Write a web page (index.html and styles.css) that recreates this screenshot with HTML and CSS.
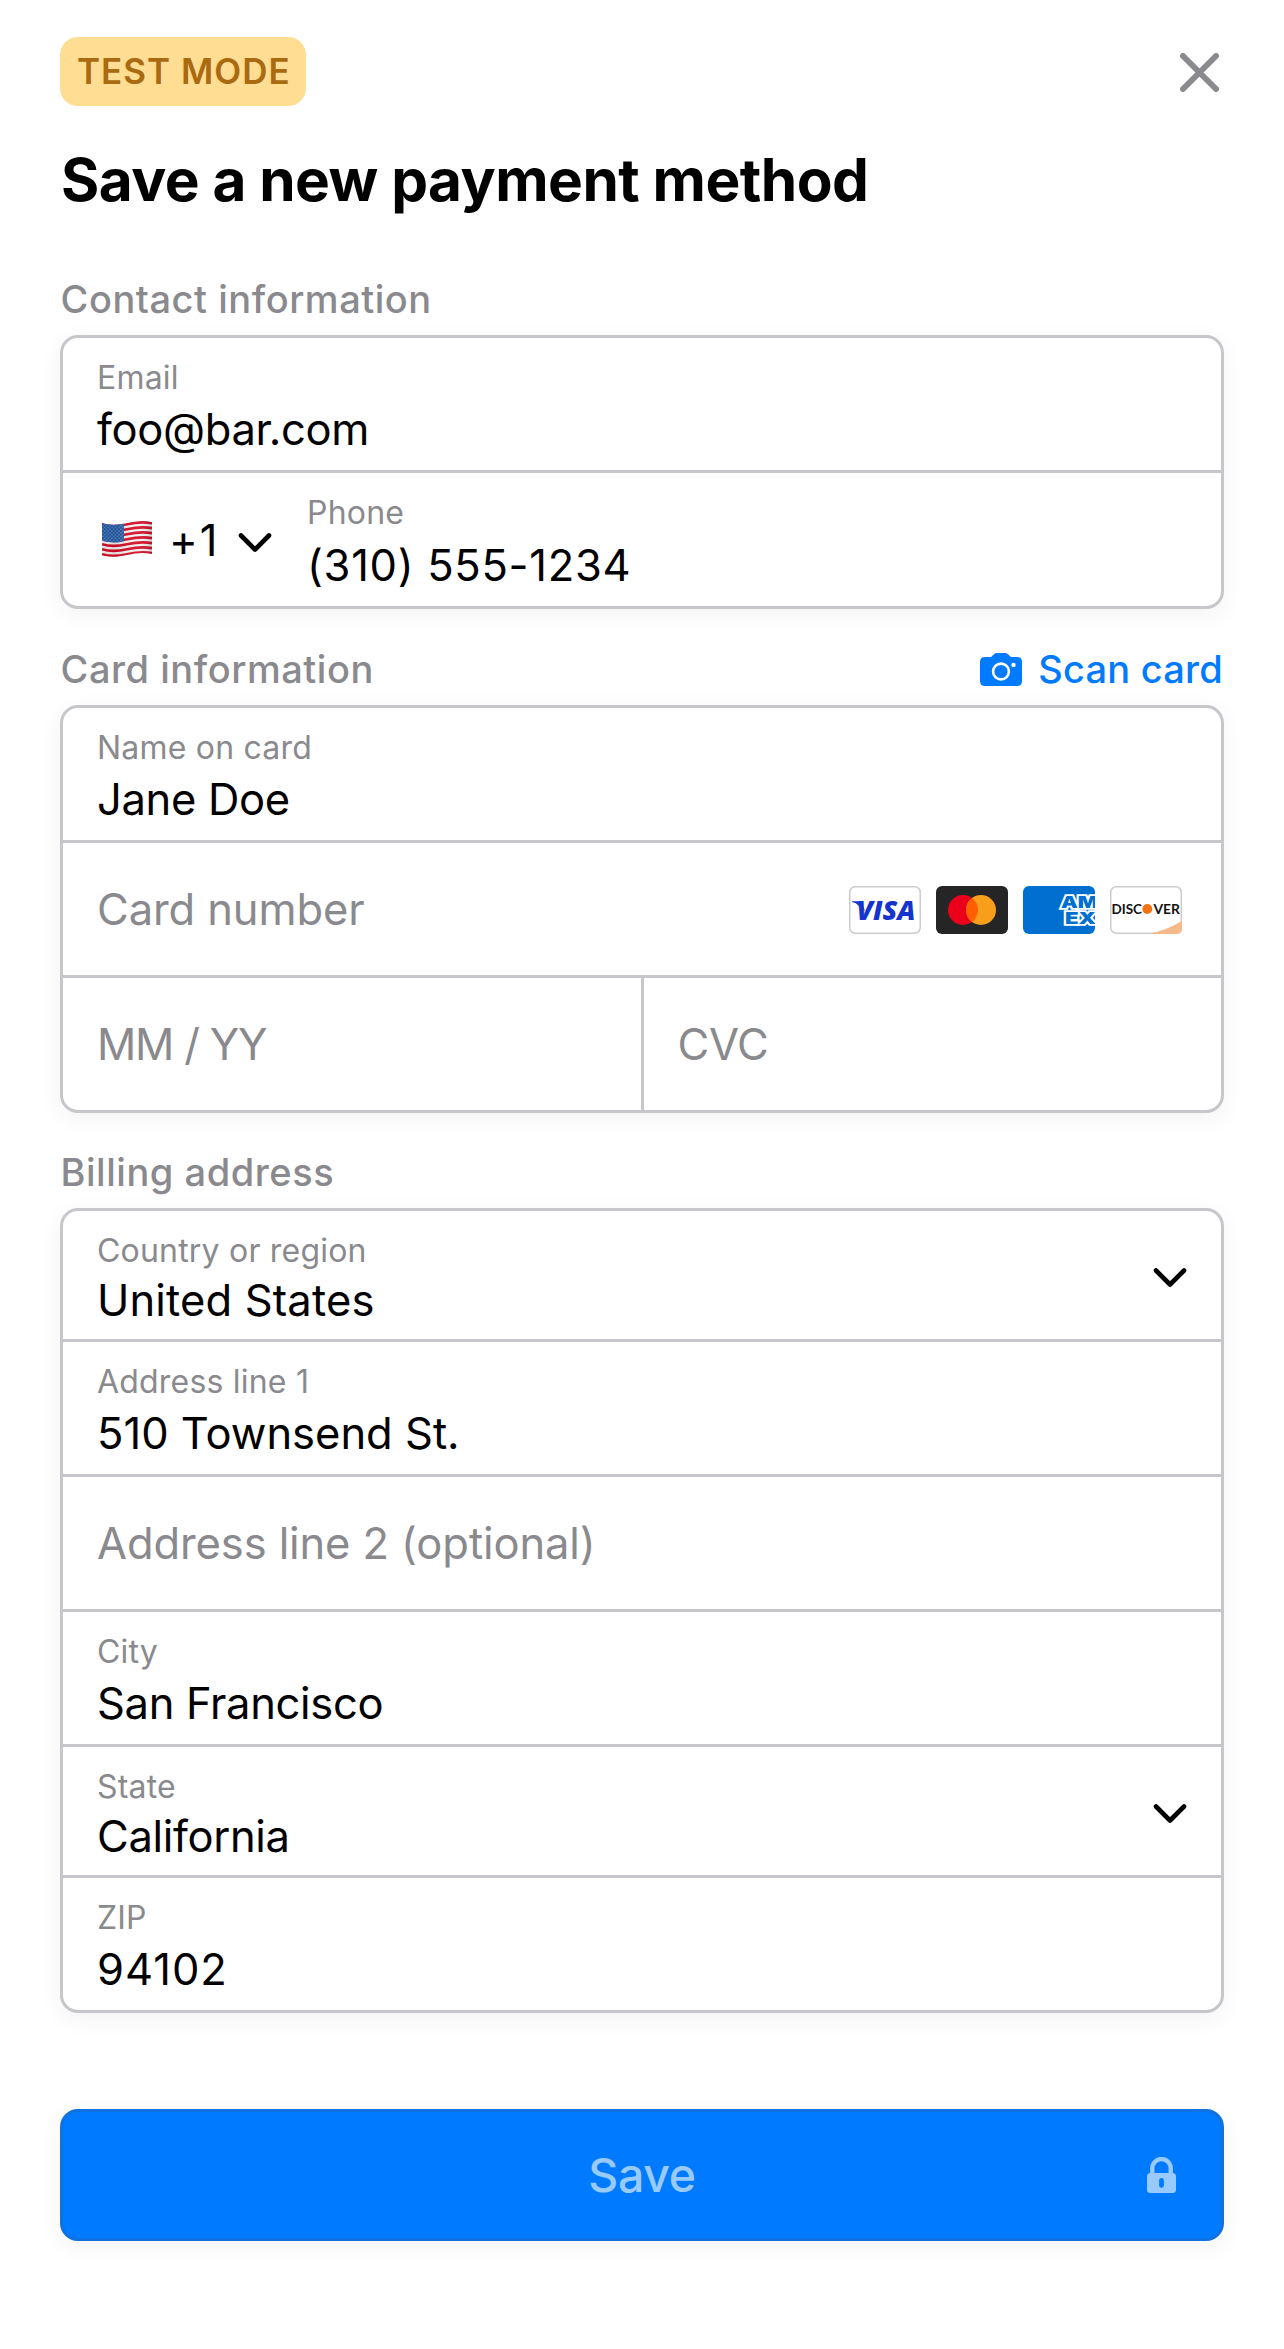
FILE: index.html
```html
<!DOCTYPE html>
<html lang="en">
<head>
<meta charset="utf-8">
<title>Save a new payment method</title>
<link rel="stylesheet" href="styles.css">
</head>
<body>
<svg class="defs" aria-hidden="true">
  <symbol id="chevron" viewBox="0 0 34 24"><path d="M3 7.500 17 21.500 31 7.500" fill="none" stroke="#000" stroke-width="4.600" stroke-linecap="round" stroke-linejoin="round"/></symbol>
</svg>
<main class="sheet">
  <header class="topbar">
    <span class="badge">TEST MODE</span>
    <svg class="close" viewBox="0 0 39 39"><path d="M3 3 36 36M36 3 3 36" stroke="#8a8a8e" stroke-width="6" stroke-linecap="round"/></svg>
  </header>
  <h1 class="title">Save a new payment method</h1>

  <div class="section-head first"><h2>Contact information</h2></div>
  <section class="group">
    <div class="field"><span class="label">Email</span><span class="value snug">foo@bar.com</span></div>
    <div class="field phone">
      <svg class="flag" viewBox="0 0 50 36">
        <defs>
          <clipPath id="wave"><path d="M0 2C8 4.500 16 4 25 2S42-.7 50 1V33C42 31.300 34 32 25 34S8 36.500 0 34.500Z"/></clipPath>
          <path id="stripe" d="M0 3.200C8 5.700 16 5.200 25 3.200S42 .5 50 2.200" fill="none" stroke-width="2.700"/>
          <linearGradient id="shade"><stop offset="0" stop-color="#000" stop-opacity=".06"/><stop offset=".3" stop-color="#000" stop-opacity=".08"/><stop offset=".7" stop-color="#fff" stop-opacity=".06"/><stop offset="1" stop-color="#000" stop-opacity=".14"/></linearGradient>
          <pattern id="stars" width="3.600" height="3.600" patternUnits="userSpaceOnUse"><circle cx=".9" cy=".9" r=".55" fill="#dfe9f7"/><circle cx="2.700" cy="2.700" r=".55" fill="#dfe9f7"/></pattern>
        </defs>
        <g clip-path="url(#wave)">
          <rect width="50" height="37" fill="#f4f1f2"/>
          <g stroke="#d5102a">
            <use href="#stripe"/><use href="#stripe" y="5"/><use href="#stripe" y="10"/><use href="#stripe" y="15"/><use href="#stripe" y="20"/><use href="#stripe" y="25"/><use href="#stripe" y="30"/>
          </g>
          <path d="M0 0H22V20.200C16 22 8 22 0 19.800Z" fill="#2259a6"/>
          <path d="M0 0H22V20.200C16 22 8 22 0 19.800Z" fill="url(#stars)"/>
          <rect width="50" height="37" fill="url(#shade)"/>
        </g>
      </svg>
      <span class="code">+1</span>
      <svg class="chevron"><use href="#chevron"/></svg>
      <div class="stack"><span class="label">Phone</span><span class="value digits">(310) 555-1234</span></div>
    </div>
  </section>

  <div class="section-head second">
    <h2>Card information</h2>
    <span class="scan">
      <svg class="camera" viewBox="0 0 42 33"><path d="M5 4H11L14 1.200Q15.200 0 17 0H25Q26.800 0 28 1.200L31 4H37Q42 4 42 9V28Q42 33 37 33H5Q0 33 0 28V9Q0 4 5 4Z" fill="#007aff"/><circle cx="21" cy="18.500" r="7.900" fill="none" stroke="#fff" stroke-width="2.600"/><circle cx="33.500" cy="12" r="2.200" fill="#fff"/></svg>
      <span>Scan card</span>
    </span>
  </div>
  <section class="group">
    <div class="field"><span class="label">Name on card</span><span class="value snug">Jane Doe</span></div>
    <div class="field inline">
      <span class="placeholder">Card number</span>
      <div class="brands">
        <svg viewBox="0 0 72 48"><rect x=".75" y=".75" width="70.500" height="46.500" rx="5.500" fill="#fff" stroke="#ccc" stroke-width="1.500"/><path d="M3 15.200H12L16 25 10 20Q7 16.600 3 16Z" fill="#1434cb"/><text x="7.500" y="34.300" class="visa" textLength="59" lengthAdjust="spacingAndGlyphs">VISA</text></svg>
        <svg viewBox="0 0 72 48"><rect width="72" height="48" rx="6" fill="#252525"/><circle cx="27" cy="24" r="15" fill="#eb001b"/><circle cx="45" cy="24" r="15" fill="#f79e1b"/><path d="M36 12A15 15 0 0 1 36 36A15 15 0 0 1 36 12Z" fill="#ff5f00"/></svg>
        <svg viewBox="0 0 72 48"><defs><clipPath id="card"><rect width="72" height="48" rx="6"/></clipPath></defs><g clip-path="url(#card)"><rect width="72" height="48" fill="#016fd0"/><text x="38" y="22" class="amex" textLength="37" lengthAdjust="spacingAndGlyphs">AM</text><text x="42" y="38.300" class="amex" textLength="31" lengthAdjust="spacingAndGlyphs">EX</text></g></svg>
        <svg viewBox="0 0 72 48"><rect x=".75" y=".75" width="70.500" height="46.500" rx="5.500" fill="#fff" stroke="#ccc" stroke-width="1.500"/><path d="M39 48Q58 43.500 72 35V42Q72 48 66 48Z" fill="#f8b98a"/><text x="1.500" y="27.700" class="discover" textLength="30.500" lengthAdjust="spacingAndGlyphs">DISC</text><circle cx="37.300" cy="23" r="5" fill="#f47216"/><text x="43.500" y="27.700" class="discover" textLength="26.500" lengthAdjust="spacingAndGlyphs">VER</text></svg>
      </div>
    </div>
    <div class="pair">
      <div class="field inline"><span class="placeholder expiry">MM / YY</span></div>
      <div class="field inline"><span class="placeholder cvc">CVC</span></div>
    </div>
  </section>

  <div class="section-head third"><h2>Billing address</h2></div>
  <section class="group">
    <div class="field select"><div class="stack"><span class="label">Country or region</span><span class="value open">United States</span></div><svg class="chevron"><use href="#chevron"/></svg></div>
    <div class="field"><span class="label">Address line 1</span><span class="value">510 Townsend St.</span></div>
    <div class="field inline"><span class="placeholder">Address line 2 (optional)</span></div>
    <div class="field"><span class="label">City</span><span class="value snug">San Francisco</span></div>
    <div class="field select"><div class="stack"><span class="label">State</span><span class="value snug">California</span></div><svg class="chevron"><use href="#chevron"/></svg></div>
    <div class="field"><span class="label">ZIP</span><span class="value zip">94102</span></div>
  </section>

  <button class="save" type="button">
    <span class="save-text">Save</span>
    <svg class="lock" viewBox="0 0 29 36"><path d="M5.300 18V11.200a9.200 9.200 0 0 1 18.400 0V18" fill="none" stroke="#99caff" stroke-width="4.400"/><path fill-rule="evenodd" d="M3.500 16H25.500Q29 16 29 19.500V32.500Q29 36 25.500 36H3.500Q0 36 0 32.500V19.500Q0 16 3.500 16ZM14.500 21a2.400 2.400 0 0 0-2.400 2.400v5a2.400 2.400 0 0 0 4.800 0v-5A2.400 2.400 0 0 0 14.500 21Z" fill="#99caff"/></svg>
  </button>
</main>
</body>
</html>
```
FILE: styles.css
```css
* { box-sizing: border-box; }
body {
  margin: 0;
  background: #fff;
  color: #000;
  font-family: Inter, "Liberation Sans", sans-serif;
}
svg { display: block; flex: none; }
.defs { position: absolute; width: 0; height: 0; }
.sheet { min-height: 2349px; padding: 37px 60px 108px; }

.topbar { display: flex; justify-content: space-between; align-items: center; height: 69px; padding-right: 5px; }
.badge {
  height: 69px;
  width: 246px;
  padding-left: 17px;
  border-radius: 18px;
  background: #ffdd93;
  color: #a96a10;
  font-size: 35px;
  font-weight: 600;
  line-height: 69px;
  letter-spacing: 1px;
  white-space: nowrap;
}
.close { width: 39px; height: 39px; margin-top: 1px; }
.title { margin: 39px 0 0; padding-left: 1px; font-size: 58.5px; font-weight: 700; line-height: 70px; letter-spacing: -.52px; }

.section-head { display: flex; justify-content: space-between; height: 46px; margin-bottom: 13px; line-height: 46px; font-size: 38px; font-weight: 500; }
.section-head h2 { margin: 0; padding-left: .5px; font: inherit; font-weight: 480; letter-spacing: .54px; color: #8a8a8e; }
.first { margin-top: 61px; }
.second { margin-top: 37px; }
.third { margin-top: 36px; }
.scan { display: flex; align-items: center; gap: 16px; padding-right: 1px; color: #007aff; font-weight: 480; letter-spacing: .22px; }
.camera { width: 42px; height: 33px; }

.group {
  border: 3px solid #c7c6cb;
  border-radius: 18px;
  background: #fff;
  box-shadow: 0 6px 24px rgba(0, 0, 0, .05);
}
.group > * + * { border-top: 3px solid #c7c6cb; }
.field { display: flex; flex-direction: column; height: 132px; padding: 20px 33px 0 34px; white-space: nowrap; }
.group > .field + .field, .pair { height: 135px; }
.label { font-size: 32px; line-height: 40px; letter-spacing: .2px; color: #8a8a8e; }
.value { margin-top: 4px; font-size: 43.5px; line-height: 54px; }
.snug { letter-spacing: -.33px; }
.open { letter-spacing: .15px; }
.digits { letter-spacing: .7px; }
.zip { letter-spacing: 1px; }
.stack { display: flex; flex-direction: column; align-self: flex-start; }
.group > .field.inline, .inline { flex-direction: row; align-items: center; justify-content: space-between; padding-top: 0; }
.placeholder { font-size: 43.5px; line-height: 54px; letter-spacing: -.1px; color: #8a8a8e; }
.expiry { letter-spacing: -1.2px; }
.cvc { letter-spacing: -.4px; }

.group > .field.phone { flex-direction: row; align-items: center; height: 136px; padding: 0 33px 0 39px; }
.flag { width: 50px; height: 36px; margin-bottom: 2px; }
.code { width: 69px; margin-left: 17px; font-size: 43.5px; letter-spacing: 2px; }
.phone .stack { margin-left: 35px; padding-top: 20px; }
.phone .value { margin-top: 5px; }
.chevron { width: 34px; height: 24px; }

.brands { display: flex; gap: 15px; margin: 2px 6px 0 0; }
.brands svg { width: 72px; height: 48px; }
.visa { font: italic 800 26.500px "Open Sans", sans-serif; fill: #1434cb; }
.amex { font: 900 16.500px Inter, sans-serif; fill: #016fd0; stroke: #fff; stroke-width: 3.400px; paint-order: stroke; }
.discover { font: 700 13.500px Lato, sans-serif; fill: #111; }

.pair { display: flex; }
.pair .field { flex: 1; }
.pair .field + .field { border-left: 3px solid #c7c6cb; }

.group > .field.select { flex-direction: row; justify-content: space-between; align-items: center; height: 128px; padding: 0 34px; }
.group > .field + .field.select { height: 131px; }
.select .stack { padding-top: 20px; }
.select .value { margin-top: 2px; }

.save {
  display: grid;
  grid-template-columns: 1fr auto 1fr;
  align-items: center;
  width: 100%;
  height: 132px;
  margin-top: 96px;
  padding: 0 45px;
  border: 3px solid #0f72e0;
  border-radius: 18px;
  background: #007aff;
  box-shadow: 0 6px 24px rgba(0, 0, 0, .05);
  color: #99caff;
  font: 500 46.500px Inter, sans-serif;
}
.save-text { grid-column: 2; letter-spacing: -.4px; }
.lock { justify-self: end; width: 29px; height: 36px; }
```
